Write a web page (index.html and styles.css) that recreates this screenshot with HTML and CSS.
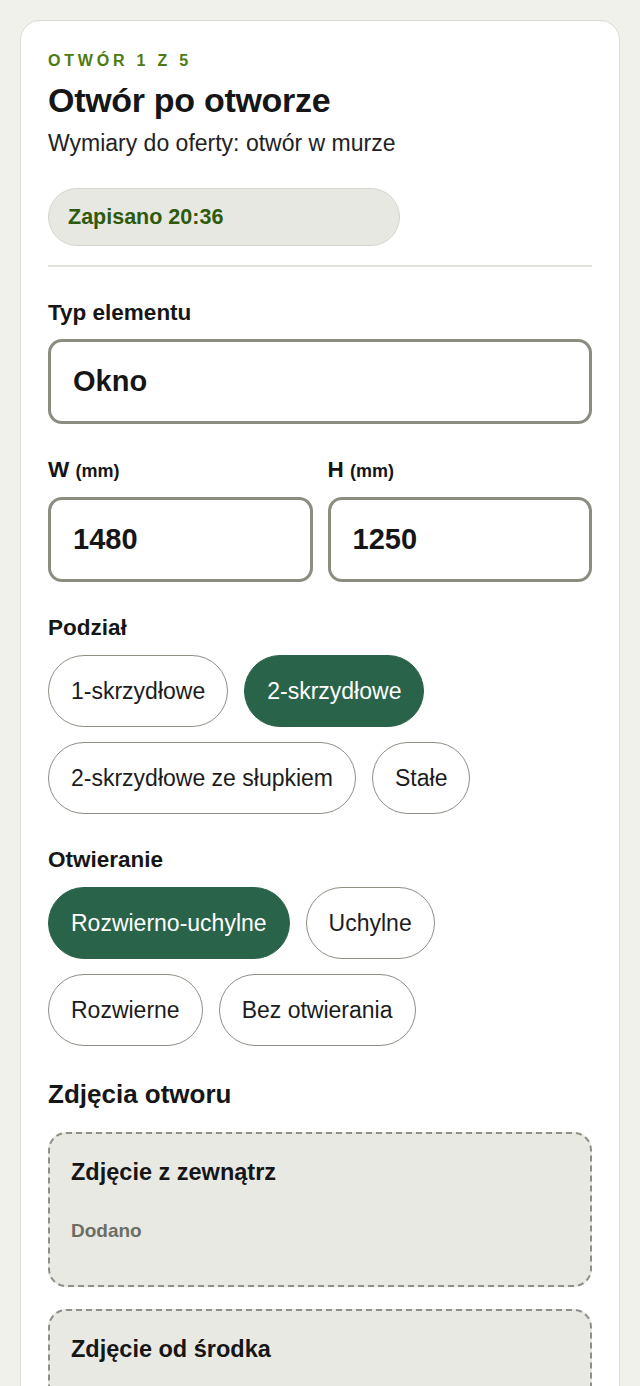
FILE: index.html
```html
<!DOCTYPE html>
<html lang="pl">
<head>
  <meta charset="UTF-8">
  <meta name="viewport" content="width=device-width, initial-scale=1.0">
  <title>Otwór po otworze</title>
  <link rel="stylesheet" href="styles.css">
</head>
<body>

<div class="card">
  <div class="eyebrow">Otwór 1 z 5</div>
  <h1 class="title">Otwór po otworze</h1>
  <p class="subtitle">Wymiary do oferty: otwór w murze</p>
  <div class="saved">Zapisano 20:36</div>

  <hr class="divider">

  <div class="field">
    <label class="label">Typ elementu</label>
    <div class="input">Okno</div>
  </div>

  <div class="dims">
    <div class="field">
      <label class="label">W <small>(mm)</small></label>
      <div class="input">1480</div>
    </div>
    <div class="field">
      <label class="label">H <small>(mm)</small></label>
      <div class="input">1250</div>
    </div>
  </div>

  <div class="field">
    <label class="label">Podział</label>
    <div class="chips">
      <button class="chip">1-skrzydłowe</button>
      <button class="chip active">2-skrzydłowe</button>
      <button class="chip">2-skrzydłowe ze słupkiem</button>
      <button class="chip">Stałe</button>
    </div>
  </div>

  <div class="field">
    <label class="label">Otwieranie</label>
    <div class="chips">
      <button class="chip active">Rozwierno-uchylne</button>
      <button class="chip">Uchylne</button>
      <button class="chip">Rozwierne</button>
      <button class="chip">Bez otwierania</button>
    </div>
  </div>

  <h2 class="section-title">Zdjęcia otworu</h2>

  <div class="photo">
    <div class="photo-title">Zdjęcie z zewnątrz</div>
    <div class="photo-status">Dodano</div>
  </div>

  <div class="photo">
    <div class="photo-title">Zdjęcie od środka</div>
    <div class="photo-status">Dodano</div>
  </div>
</div>

</body>
</html>
```

FILE: styles.css
```css
body {
  font-family: 'Liberation Sans', Arial, sans-serif;
  margin: 0;
  padding: 20px 20px 40px;
  background-color: #f1f1ec;
  color: #161616;
}

.card {
  background: #fff;
  border: 1px solid #dcdcd6;
  border-radius: 20px;
  padding: 30px 27px 28px;
}

.eyebrow {
  color: #4e7a12;
  font-size: 16px;
  font-weight: bold;
  text-transform: uppercase;
  letter-spacing: 3.8px;
  line-height: 20px;
}

.title {
  font-size: 34px;
  margin: 9px 0 0;
  line-height: 40px;
  letter-spacing: -0.3px;
}

.subtitle {
  font-size: 23px;
  margin: 9px 0 0;
  line-height: 28px;
  color: #222;
}

.saved {
  margin-top: 31px;
  width: 352px;
  box-sizing: border-box;
  height: 58px;
  display: flex;
  align-items: center;
  padding: 0 19px;
  background: #e8e8e3;
  border: 1px solid #d6d6cf;
  border-radius: 29px;
  color: #2f5a0c;
  font-weight: bold;
  font-size: 21.5px;
}

.divider {
  border: none;
  border-top: 2px solid #e2e2dd;
  margin: 19px 0 0;
}

.field {
  margin-top: 32px;
}

.label {
  display: block;
  font-weight: bold;
  font-size: 22.5px;
  line-height: 28px;
}

.label small {
  font-size: 18px;
}

.input {
  margin-top: 12px;
  height: 85px;
  box-sizing: border-box;
  border: 3px solid #8b8d80;
  border-radius: 14px;
  display: flex;
  align-items: center;
  padding: 0 22px;
  font-size: 29px;
  font-weight: bold;
}

.dims {
  display: grid;
  grid-template-columns: 1fr 1fr;
  gap: 15px;
}

.chips {
  display: flex;
  flex-wrap: wrap;
  gap: 15px 16px;
  margin-top: 13px;
}

.chip {
  font-family: inherit;
  font-size: 23px;
  color: #1c1c1c;
  background: #fff;
  border: 1.5px solid #8e8e85;
  border-radius: 36px;
  height: 72px;
  padding: 0 22px;
  cursor: pointer;
}

.chip.active {
  background: #29634a;
  border-color: #29634a;
  color: #fff;
}

.section-title {
  font-size: 26px;
  margin: 32px 0 0;
  line-height: 32px;
}

.photo {
  margin-top: 22px;
  background: #e9e9e4;
  border: 2px dashed #8f8f88;
  border-radius: 18px;
  height: 155px;
  box-sizing: border-box;
  padding: 24px 21px;
}

.photo-title {
  font-size: 23.5px;
  font-weight: bold;
  line-height: 28px;
}

.photo-status {
  margin-top: 34px;
  font-size: 19px;
  line-height: 22px;
  font-weight: bold;
  color: #6c6e64;
}
```
